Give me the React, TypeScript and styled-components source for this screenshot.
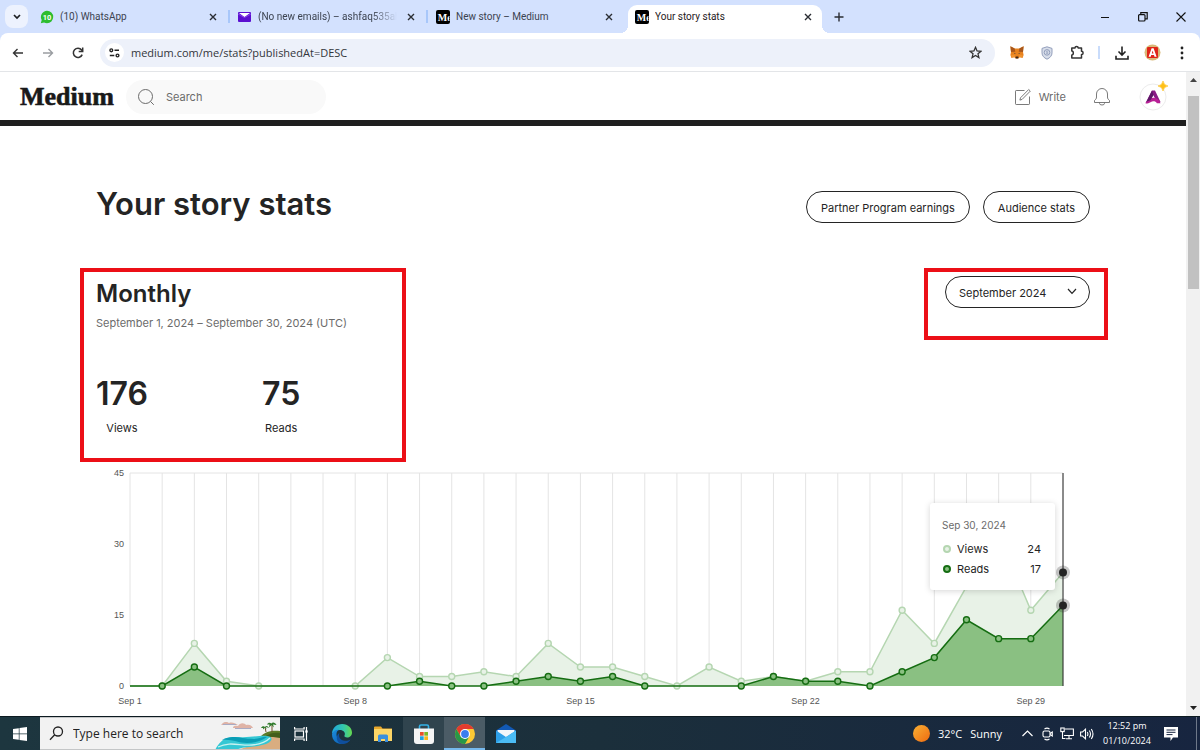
import React from 'react';
import styled, { createGlobalStyle } from 'styled-components';

const ui = `'Open Sans', 'Noto Sans', sans-serif`;
const sans = `Inter, 'Liberation Sans', sans-serif`;

const GlobalStyle = createGlobalStyle`
  *, *::before, *::after { box-sizing: border-box; }
  body { margin: 0; background: #fff; font-family: ${sans}; color: #242424; }
  button, input, select { font: inherit; color: inherit; }
  h1, h2, p, dl, dd { margin: 0; }
`;

const Screen = styled.div`
  min-height: 100vh;
  display: flex;
  flex-direction: column;
`;

/* ---------- Browser chrome ---------- */

const TabStrip = styled.div`
  height: 33px;
  flex: none;
  display: flex;
  align-items: stretch;
  background: #d3e1fe;
  padding-left: 5px;
`;

const IconButton = styled.button<{ $w?: number; $h?: number }>`
  width: ${(p) => p.$w ?? 30}px;
  height: ${(p) => p.$h ?? 30}px;
  flex: none;
  padding: 0;
  border: 0;
  background: none;
  display: flex;
  align-items: center;
  justify-content: center;
`;

const TabSearch = styled(IconButton)`
  align-self: center;
  background: #edf2fe;
  border-radius: 8px;
  margin-right: 3px;
`;

const Tab = styled.div<{ $active?: boolean; $divider?: boolean }>`
  flex: 0 1 198px;
  min-width: 0;
  position: relative;
  display: flex;
  align-items: center;
  gap: 6px;
  padding: 0 8px 0 9px;
  font: 10px/16px Roboto, ${ui};
  color: #3c4350;
  ${(p) =>
    p.$divider &&
    `&::after {
      content: '';
      position: absolute;
      right: -1px;
      top: 10px;
      width: 2px;
      height: 13px;
      background: #a8c7fa;
    }`}
  ${(p) =>
    p.$active &&
    `flex-basis: 194px;
     margin: 5px 0 0 3px;
     padding: 0 6px 5px 7px;
     background: #fff;
     color: #1f2023;
     border-radius: 9px 9px 0 0;
     &::before, &::after {
       content: '';
       position: absolute;
       bottom: 0;
       width: 8px;
       height: 8px;
     }
     &::before { left: -8px; background: radial-gradient(circle at 0 0, transparent 8px, #fff 8px); }
     &::after { right: -8px; background: radial-gradient(circle at 100% 0, transparent 8px, #fff 8px); }`}
`;

const TabTitle = styled.span<{ $fade?: boolean }>`
  flex: 1;
  min-width: 0;
  overflow: hidden;
  white-space: nowrap;
  padding-top: 1px;
  ${(p) => p.$fade && `mask-image: linear-gradient(to right, #000 82%, transparent);`}
`;

const WindowControls = styled.div`
  margin-left: auto;
  display: flex;
  align-items: center;
`;

const Toolbar = styled.div`
  height: 39px;
  flex: none;
  display: flex;
  align-items: center;
  padding: 0 3px;
  background: #d3e1fe;
  position: relative;
  isolation: isolate;
  &::before {
    content: '';
    position: absolute;
    inset: 0;
    z-index: -1;
    background: #fff;
    border-radius: 8px 8px 0 0;
    border-bottom: 1px solid #e3e5e8;
  }
`;

const Omnibox = styled.div`
  flex: 1;
  height: 28px;
  margin: 0 7px 0 7px;
  display: flex;
  align-items: center;
  padding: 0 5px;
  border-radius: 14px;
  background: #edf1fa;
`;

const SiteInfo = styled(IconButton)`
  background: #fff;
  border-radius: 50%;
`;

const Address = styled.input`
  flex: 1;
  min-width: 0;
  border: 0;
  outline: 0;
  padding: 0 7px;
  background: none;
  font: 11px/20px ${ui};
  color: #33363b;
`;

const ToolbarDivider = styled.span`
  width: 2px;
  height: 13px;
  margin: 0 7px 0 6px;
  background: #c9dcfb;
`;

/* ---------- Page ---------- */

const Viewport = styled.div`
  flex: 1;
  display: flex;
`;

const Page = styled.div`
  flex: 1;
  min-width: 0;
`;

const Scrollbar = styled.div`
  width: 14px;
  flex: none;
  display: flex;
  flex-direction: column;
  align-items: center;
  background: #f1f1f1;
`;

const ScrollArrow = styled.button`
  width: 14px;
  height: 16px;
  padding: 0;
  border: 0;
  background: none;
  display: grid;
  place-items: center;
`;

const ScrollTrack = styled.div`
  flex: 1;
  width: 11px;
  padding-top: 8px;
`;

const ScrollThumb = styled.div`
  height: 32%;
  background: #c1c1c1;
`;

const SiteHeader = styled.header`
  height: 54px;
  display: flex;
  align-items: center;
  padding: 1px 19px 0 20px;
  border-bottom: 6px solid #1f1f1f;
`;

const Logo = styled.a`
  font: 700 26px/30px 'Liberation Serif', serif;
  -webkit-text-stroke: 0.6px #191919;
  color: #191919;
  text-decoration: none;
`;

const SearchBox = styled.label`
  width: 200px;
  height: 34px;
  margin-left: 12px;
  padding: 0 10px 0 11px;
  display: flex;
  align-items: center;
  gap: 11px;
  border-radius: 17px;
  background: #f9f9f9;
`;

const SearchInput = styled.input`
  flex: 1;
  min-width: 0;
  padding: 0;
  border: 0;
  outline: 0;
  background: none;
  font-size: 11px;
  line-height: 20px;
  color: #242424;
  &::placeholder { color: #6b6b6b; opacity: 1; }
`;

const HeaderActions = styled.nav`
  margin-left: auto;
  display: flex;
  align-items: center;
`;

const WriteLink = styled.a`
  display: flex;
  align-items: center;
  gap: 7px;
  font-size: 11px;
  line-height: 20px;
  color: #6b6b6b;
  text-decoration: none;
  margin-right: 26px;
`;

const AvatarButton = styled(IconButton)`
  margin-left: 27px;
  position: relative;
`;

const Sparkle = styled.svg`
  position: absolute;
  top: -2px;
  right: -1px;
`;

const Main = styled.main`
  padding: 59px 96px 0;
`;

const TitleRow = styled.div`
  display: flex;
  align-items: center;
  justify-content: space-between;
`;

const Title = styled.h1`
  font-size: 31px;
  font-weight: 600;
  line-height: 36px;
`;

const Actions = styled.div`
  display: flex;
  gap: 13px;
  padding-top: 6px;
`;

const PillLink = styled.a`
  height: 32px;
  padding: 0 14px;
  border: 1px solid #242424;
  border-radius: 16px;
  font-size: 11px;
  line-height: 32px;
  color: #242424;
  text-decoration: none;
  white-space: nowrap;
`;

const SummaryRow = styled.div`
  display: flex;
  align-items: flex-start;
  justify-content: space-between;
  margin: 45px -18px 0 -16px;
`;

const Highlight = styled.section`
  border: 4px solid #ec0f17;
`;

const Summary = styled(Highlight)`
  width: 326px;
  height: 194px;
  padding: 8px 12px;
`;

const Picker = styled(Highlight)`
  width: 184px;
  height: 72px;
  padding: 4px 14px 0 17px;
`;

const SummaryTitle = styled.h2`
  font-size: 24px;
  font-weight: 600;
  line-height: 28px;
`;

const Period = styled.p`
  margin-top: 6px;
  font-size: 11px;
  line-height: 18px;
  color: #6b6b6b;
  white-space: nowrap;
`;

const Totals = styled.dl`
  display: flex;
  margin-top: 42px;
`;

const Total = styled.div`
  flex: 0 0 166px;
  display: flex;
`;

const TotalInner = styled.div`
  display: flex;
  flex-direction: column-reverse;
  align-items: center;
  gap: 5px;
`;

const TotalLabel = styled.dt`
  font-size: 11px;
  line-height: 18px;
`;

const TotalValue = styled.dd`
  font-size: 32px;
  font-weight: 600;
  line-height: 40px;
`;

const SelectWrap = styled.div`
  height: 32px;
  position: relative;
`;

const MonthSelect = styled.select`
  appearance: none;
  width: 100%;
  height: 32px;
  padding: 2px 30px 0 13px;
  border: 1px solid #242424;
  border-radius: 16px;
  background: none;
  font-size: 11px;
`;

const SelectArrow = styled.svg`
  position: absolute;
  right: 13px;
  top: 12px;
  pointer-events: none;
`;

const ChartBox = styled.figure`
  position: relative;
  margin: 5px 0 0;
`;

const ChartSvg = styled.svg`
  display: block;
  width: 100%;
  height: auto;
  overflow: visible;
  font: 9px 'Liberation Sans', Arial, sans-serif;
`;

const Tooltip = styled.div`
  position: absolute;
  top: 15%;
  right: 35px;
  width: 125px;
  height: 87px;
  padding: 13px 14px 0 12px;
  background: #fff;
  border-radius: 3px;
  box-shadow: 0 1px 6px rgba(0, 0, 0, 0.17);
`;

const TooltipDate = styled.p`
  margin-bottom: 5px;
  font-size: 10px;
  line-height: 18px;
  color: #6b6b6b;
`;

const TooltipRow = styled.div`
  display: flex;
  align-items: center;
  gap: 6px;
  padding-left: 1px;
  font-size: 11px;
  line-height: 20px;
`;

const Dot = styled.span<{ $border: string; $fill: string }>`
  width: 8px;
  height: 8px;
  border-radius: 50%;
  border: 2px solid ${(p) => p.$border};
  background: ${(p) => p.$fill};
`;

const TooltipValue = styled.span`
  margin-left: auto;
`;

/* ---------- Taskbar ---------- */

const Taskbar = styled.footer`
  height: 34px;
  flex: none;
  display: flex;
  align-items: stretch;
  border-top: 1px solid #0c1a20;
  background: linear-gradient(90deg, #1d363f, #1b2f3b 50%, #172540);
  color: #fff;
  font-family: ${ui};
`;

const TaskButton = styled.button<{ $state?: 'open' | 'focused' }>`
  width: 41px;
  padding: 0;
  border: 0;
  display: flex;
  align-items: center;
  justify-content: center;
  background: ${(p) => (p.$state === 'focused' ? '#4b5c66' : p.$state === 'open' ? '#30444e' : 'none')};
  box-shadow: ${(p) => (p.$state === 'focused' ? 'inset 0 -2px #76b9ed' : 'none')};
`;

const StartButton = styled(TaskButton)`
  width: 40px;
`;

const TaskSearch = styled.label`
  width: 240px;
  display: flex;
  align-items: center;
  padding-left: 9px;
  gap: 9px;
  overflow: hidden;
  background: #f2f2f2;
  border: solid #c4c6c7;
  border-width: 1px 0;
`;

const TaskInput = styled.input`
  flex: 1;
  min-width: 0;
  padding: 0;
  border: 0;
  outline: 0;
  background: none;
  font-size: 12px;
  line-height: 20px;
  &::placeholder { color: #222; opacity: 1; }
`;

const Tray = styled.div`
  margin-left: auto;
  display: flex;
  align-items: center;
`;

const Weather = styled.div`
  display: flex;
  align-items: center;
  gap: 8px;
  margin-right: 15px;
  font-size: 11px;
  line-height: 20px;
`;

const Clock = styled.time`
  width: 56px;
  margin: 0 9px 2px 2px;
  font-size: 9px;
  line-height: 15px;
  text-align: center;
`;

const ShowDesktop = styled.button`
  width: 4px;
  height: 100%;
  margin-left: 18px;
  padding: 0;
  border: 0;
  border-left: 1px solid #6e7889;
  background: none;
`;

/* ---------- Data ---------- */

const views = [0, 0, 9, 1, 0, 0, 0, 0, 6, 2, 2, 3, 2, 9, 4, 4, 2, 0, 4, 1, 2, 1, 3, 3, 16, 9, 21, 32, 16, 24];
const reads = [0, 0, 4, 0, 0, 0, 0, 0, 0, 1, 0, 0, 1, 2, 1, 2, 0, 0, 0, 0, 2, 1, 1, 0, 3, 6, 14, 10, 10, 17];

const LEFT = 34;
const RIGHT = 967;
const TOP = 6;
const BASE = 219;
const px = (day: number) => LEFT + (day * (RIGHT - LEFT)) / (views.length - 1);
const py = (n: number) => BASE - (n * (BASE - TOP)) / 45;

function Series({ data, line, fill, dot }: { data: number[]; line: string; fill: string; dot: string }) {
  const points = data.map((n, i) => `${px(i)},${py(n)}`).join(' ');
  const last = data.length - 1;
  return (
    <g>
      <polygon points={`${LEFT},${BASE} ${points} ${RIGHT},${BASE}`} fill={fill} />
      <polyline points={points} fill="none" stroke={line} strokeWidth="1.5" />
      {data.map((n, i) =>
        i < last && (n || data[i - 1] || data[i + 1]) ? (
          <circle key={i} cx={px(i)} cy={py(n)} r="3" fill={dot} stroke={line} strokeWidth="1.4" />
        ) : null,
      )}
    </g>
  );
}

function Chart() {
  return (
    <ChartBox>
      <ChartSvg viewBox="0 0 994 243" role="img" aria-label="Daily views and reads, September 2024">
        <g stroke="#e4e4e4">
          {views.map((_, i) => (
            <line key={i} x1={px(i)} x2={px(i)} y1={TOP} y2={BASE} />
          ))}
          <line x1={LEFT} x2={RIGHT} y1={TOP} y2={TOP} />
        </g>
        <g fill="#555" textAnchor="end">
          {[0, 15, 30, 45].map((n) => (
            <text key={n} x="28" y={py(n) + 3}>{n}</text>
          ))}
        </g>
        <g fill="#555" textAnchor="middle">
          {[1, 8, 15, 22, 29].map((d) => (
            <text key={d} x={px(d - 1)} y="237">{`Sep ${d}`}</text>
          ))}
        </g>
        <Series data={views} line="#b5d6b1" fill="#e8f2e7" dot="#e8f2e7" />
        <Series data={reads} line="#156d12" fill="#8ac082" dot="#8ac082" />
        <line x1={RIGHT} x2={RIGHT} y1={TOP} y2={BASE} stroke="#242424" />
        {[24, 17].map((n) => (
          <g key={n} fill="#242424">
            <circle cx={RIGHT} cy={py(n)} r="7" opacity="0.25" />
            <circle cx={RIGHT} cy={py(n)} r="4" />
          </g>
        ))}
      </ChartSvg>
      <Tooltip role="tooltip">
        <TooltipDate>Sep 30, 2024</TooltipDate>
        <TooltipRow>
          <Dot $border="#b5d6b1" $fill="#e8f2e7" />
          Views
          <TooltipValue>24</TooltipValue>
        </TooltipRow>
        <TooltipRow>
          <Dot $border="#156d12" $fill="#8ac082" />
          Reads
          <TooltipValue>17</TooltipValue>
        </TooltipRow>
      </Tooltip>
    </ChartBox>
  );
}

/* ---------- Icons ---------- */

const Close = () => (
  <svg width="8" height="8" viewBox="0 0 8 8" stroke="#2a2d33" strokeWidth="1.4"><path d="M1 1l6 6M7 1L1 7" /></svg>
);

const WhatsApp = () => (
  <svg width="14" height="14" viewBox="0 0 14 14">
    <path d="M7 .8a6.2 6.2 0 0 1 0 12.4c-1 0-2-.2-2.900-.7L.8 13.300l.9-3.200A6.200 6.200 0 0 1 7 .8z" fill="#2dbd2f" />
    <text x="7" y="9.800" textAnchor="middle" fontFamily="Roboto" fontWeight="700" fontSize="7.500" fill="#fff">10</text>
  </svg>
);

const Mail = () => (
  <svg width="14" height="10" viewBox="0 0 14 10">
    <rect width="13" height="10" rx="1" fill="#5b0fd0" />
    <path d="M1 1h11L6.500 5z" fill="#fff" />
    <path d="M0 2l6.500 3.500L13 2" fill="none" stroke="#8f4df0" strokeWidth=".8" />
  </svg>
);

const MediumMark = () => (
  <svg width="14" height="14" viewBox="0 0 14 14">
    <rect width="14" height="14" rx="2" fill="#000" />
    <svg width="13.500" height="14"><text x="1.800" y="10.500" fontFamily="Liberation Serif" fontWeight="700" fontSize="10" fill="#fff">Me</text></svg>
  </svg>
);

const Fox = () => (
  <svg width="14" height="13" viewBox="0 0 14 13">
    <path d="M.4.3l4.300 2.200h4.600L13.600.3 13 6l.6 3-1 3-3-.8L8.300 12.500H5.700L4.400 11.200l-3 .8-1-3 .6-3z" fill="#e8821e" />
    <path d="M.4.3l4.300 2.200.6 3.300L1 6zM13.600.3L9.300 2.500l-.6 3.300L13 6z" fill="#a8571b" />
    <path d="M1.400 9l3-.3 1 2.500-4-.2zM12.600 9l-3-.3-1 2.500 4-.2z" fill="#f0932e" />
    <path d="M3.600 6.800l1.800.4-.2.900zM10.400 6.800l-1.800.4.200.9z" fill="#233447" />
    <path d="M5.700 10.600h2.600l.2 1.300-.4.600H5.900l-.4-.6z" fill="#3a2417" />
  </svg>
);

const Shield = () => (
  <svg width="12" height="14" viewBox="0 0 12 14" fill="none" stroke="#929ebb">
    <path d="M6 .8l5 1.600v4.400c0 3-2 5-5 6.400-3-1.400-5-3.400-5-6.400V2.400z" fill="#d8deea" />
    <circle cx="6" cy="6.400" r="2.800" />
    <path d="M7.200 5.600c-1-.8-2.200-.2-2 .4s1.800.3 1.800 1-1.200.9-2 .2" strokeWidth=".8" />
  </svg>
);

const Puzzle = () => (
  <svg width="14" height="15" viewBox="0 0 14 15" fill="none" stroke="#333" strokeWidth="1.500" strokeLinejoin="round">
    <path d="M1.800 3h3.200a1.600 1.600 0 0 1 3.200 0H11.500v3.300a1.600 1.600 0 0 1 0 3.200V13H1.800v-3c2 0 2-4 0-4z" />
  </svg>
);

const Profile = () => (
  <svg width="17" height="17" viewBox="0 0 17 17">
    <circle cx="8.500" cy="8.500" r="8" fill="#d9b978" />
    <rect x="3" y="3" width="11" height="11" rx="1" fill="#df2518" />
    <path d="M4.600 12.800L7.600 4.200h2l3 8.600h-2.100l-.5-1.700H7.200l-.5 1.700zM8.600 6.600l-.8 2.900h1.700z" fill="#fff" />
  </svg>
);

const Avatar = () => (
  <svg width="28" height="28" viewBox="0 0 28 28">
    <circle cx="14" cy="14" r="13" fill="#fff" stroke="#ececec" />
    <path d="M13 7.500h3L21.500 19l-3.500.5L14.200 12l-3.700 6.500-4 1.500z" fill="#8a1a86" />
    <path d="M6.500 20.500c1.600-4 5-6 9-5.600 3.200.4 5.200 2.300 6 5.300h-3.600c-.9-1.500-2.100-2.100-3.900-2-2.300.2-3 2.400-7.500 2.300z" fill="#b81f95" />
    <path d="M13 7.500l1.500 4.500-3 5.200-4 1.500z" fill="#5d1768" />
  </svg>
);

const Beach = () => (
  <svg width="66" height="32" viewBox="0 0 66 32">
    <path d="M8 6c2-3 6-2 7-1 3-1 6 0 9 2H7zM19 10c0-3 4-2 5-2 2-4 7-3 8-1 4-1 6 1 7 3z" fill="#dfb3a6" />
    <path d="M9 6.500h13M21 10.500h16" stroke="#a9abc4" strokeWidth="1.200" />
    <path d="M22 32c10-2 22-7 30-13h14v13z" fill="#d9ad80" />
    <path d="M46 19c4-4 9-7 20-6v6z" fill="#5a7a26" />
    <path d="M52 18c4-3 9-4 14-3v5z" fill="#425e1b" />
    <path d="M1 32C7 22 10 19 24 19c12 1 23-2 29-1 8 1 5 7-5 9-10 3-18 1-26 5z" fill="#35c7d4" />
    <path d="M8 22c10-6 18-1 32-1 6 0 10-3 13-2-6 4-12 6-20 6-9 0-15-4-25-3z" fill="#0a9db5" />
    <path d="M4 29c12-6 22-1 34-2s16-5 18-7" fill="none" stroke="#c8f2ef" strokeWidth="1.300" />
    <path d="M52 14l-1-5M58 14V7" stroke="#70502b" />
    <path d="M47 10c1-2 3-2 4-1 1-2 3-1 4 1l-3-1 .5 2.500-1.500-2-2 2V10zM53 6.500c1-2 3-2 4.500-1 1-2 4-1 5 1.500L59 6.500l1 3-2.500-2.500L55 9.500l.5-3z" fill="#2f7a2a" />
  </svg>
);

const Edge = () => (
  <svg width="22" height="22" viewBox="0 0 22 22">
    <defs>
      <linearGradient id="edgeTop" x1="0" x2="1"><stop stopColor="#1fa5e0" /><stop offset=".6" stopColor="#35c9a8" /><stop offset="1" stopColor="#65d84e" /></linearGradient>
      <linearGradient id="edgeLow" x1="0" x2="1" y2="1"><stop stopColor="#1b8bdc" /><stop offset="1" stopColor="#0b5cb0" /></linearGradient>
    </defs>
    <path d="M1 11C1 5 5.600 1 11.200 1 17.500 1 21 5.500 21 9.500c0 3.300-2.400 5-4.800 5-2 0-3.400-.9-2.700-1.900C15 9.300 12 7 9 7c-4 0-7 2-8 4z" fill="url(#edgeTop)" />
    <path d="M1 11c1-3 4-4.600 7-4.200C5.500 8 4.900 11 6 14c1.200 3.600 5 6.200 9 5.500-5 3.200-14 1-14-8.500z" fill="url(#edgeLow)" />
    <path d="M8.500 10c-1.600 3 .5 7.500 5.500 7.800 2.300.1 4.300-.6 5.600-1.400-2 3.400-6 5.100-9.600 4.500-4.500-1.500-6-8.500-1.500-10.900z" fill="#0f4f9e" />
  </svg>
);

const Explorer = () => (
  <svg width="18" height="16" viewBox="0 0 18 16">
    <path d="M0 1.500Q0 .5 1 .5h6l1.500 2H18v12.500H0z" fill="#e9a82c" />
    <path d="M0 3h18v12H0z" fill="#fcd566" />
    <path d="M4 16V10q0-1.500 1.500-1.500h7q1.500 0 1.500 1.500v6h-3v-3H7v3z" fill="#3b8fdd" />
  </svg>
);

const Store = () => (
  <svg width="20" height="20" viewBox="0 0 20 20">
    <path d="M5.500 5V2.500Q5.500 1 7 1h6q1.500 0 1.500 1.500V5" fill="none" stroke="#35b3e8" strokeWidth="1.600" />
    <path d="M0 4.500h20V17q0 3-3 3H3q-3 0-3-3z" fill="#f5f5f5" />
    <path d="M6 8h3.700v3.700H6z" fill="#e8502c" /><path d="M10.300 8H14v3.700h-3.700z" fill="#7db928" />
    <path d="M6 12.300h3.700V16H6z" fill="#1fa2e3" /><path d="M10.300 12.300H14V16h-3.700z" fill="#f9b61a" />
  </svg>
);

const ChromeLogo = () => (
  <svg width="20" height="20" viewBox="0 0 20 20">
    <circle cx="10" cy="10" r="10" fill="#fcc934" />
    <path d="M1.340 5A10 10 0 0 1 18.660 5H10L5.670 12.500z" fill="#e33b2e" />
    <path d="M1.340 5A10 10 0 0 0 10 20l4.330-7.500H5.670z" fill="#279847" />
    <circle cx="10" cy="10" r="5" fill="#fff" />
    <circle cx="10" cy="10" r="3.900" fill="#3b7ded" />
  </svg>
);

const MailApp = () => (
  <svg width="20" height="19" viewBox="0 0 20 19">
    <path d="M0 6.500L10 0l10 6.500V10H0z" fill="#1259b4" />
    <path d="M1.500 6h17v8h-17z" fill="#f3f6fa" />
    <path d="M0 6.500l10 6.500L20 6.500V19H0z" fill="#2d9fe8" />
    <path d="M0 19l10-6 10-6.500V19z" fill="#4bbcf5" />
  </svg>
);

export default function App() {
  return (
    <Screen>
      <GlobalStyle />
      <TabStrip>
        <TabSearch $w={23} $h={23} aria-label="Search tabs">
          <svg width="8" height="6" viewBox="0 0 8 6" fill="none" stroke="#1d1f22" strokeWidth="1.700"><path d="M1 1l3 3 3-3" /></svg>
        </TabSearch>
        <Tab $divider>
          <WhatsApp />
          <TabTitle>(10) WhatsApp</TabTitle>
          <IconButton $w={16} $h={16} aria-label="Close tab"><Close /></IconButton>
        </Tab>
        <Tab $divider>
          <Mail />
          <TabTitle $fade>(No new emails) – ashfaq535ah</TabTitle>
          <IconButton $w={16} $h={16} aria-label="Close tab"><Close /></IconButton>
        </Tab>
        <Tab>
          <MediumMark />
          <TabTitle>New story – Medium</TabTitle>
          <IconButton $w={16} $h={16} aria-label="Close tab"><Close /></IconButton>
        </Tab>
        <Tab $active>
          <MediumMark />
          <TabTitle>Your story stats</TabTitle>
          <IconButton $w={16} $h={16} aria-label="Close tab"><Close /></IconButton>
        </Tab>
        <IconButton $w={33} $h={33} aria-label="New tab">
          <svg width="10" height="10" viewBox="0 0 10 10" stroke="#2a2d33" strokeWidth="1.400"><path d="M5 .5v9M.5 5h9" /></svg>
        </IconButton>
        <WindowControls>
          <IconButton $w={38} $h={33} aria-label="Minimize">
            <svg width="8" height="8" viewBox="0 0 8 8" stroke="#111"><path d="M0 4.500h8" /></svg>
          </IconButton>
          <IconButton $w={38} $h={33} aria-label="Restore">
            <svg width="10" height="10" viewBox="0 0 10 10" fill="none" stroke="#111" strokeWidth="1.200"><rect x=".6" y="2.600" width="6.400" height="6.400" rx="1" /><path d="M2.800 2.500V.7h6.400v6.100H7.100" /></svg>
          </IconButton>
          <IconButton $w={38} $h={33} aria-label="Close">
            <svg width="10" height="10" viewBox="0 0 10 10" stroke="#111" strokeWidth="1.100"><path d="M.5.5l9 9M9.500.5l-9 9" /></svg>
          </IconButton>
        </WindowControls>
      </TabStrip>

      <Toolbar>
        <IconButton aria-label="Back">
          <svg width="12" height="10" viewBox="0 0 12 10" fill="none" stroke="#333" strokeWidth="1.400"><path d="M11 5H1.500M5.500 1l-4 4 4 4" /></svg>
        </IconButton>
        <IconButton aria-label="Forward">
          <svg width="12" height="10" viewBox="0 0 12 10" fill="none" stroke="#9a9da1" strokeWidth="1.400"><path d="M1 5h9.500M6.500 1l4 4-4 4" /></svg>
        </IconButton>
        <IconButton aria-label="Reload">
          <svg width="12" height="12" viewBox="0 0 12 12" fill="none" stroke="#333" strokeWidth="1.500"><path d="M10.200 7.600A4.600 4.600 0 1 1 9.600 3L10.600 4.300" /><path d="M10.700.6v4H6.700" /></svg>
        </IconButton>
        <Omnibox>
          <SiteInfo $w={19} $h={19} aria-label="Site information">
            <svg width="11" height="10" viewBox="0 0 11 10" fill="none" stroke="#222" strokeWidth="1.400"><circle cx="2.300" cy="2.300" r="1.400" /><path d="M5.500 2.300h4.500M.8 7.500h4.500" /><circle cx="8.500" cy="7.500" r="1.400" /></svg>
          </SiteInfo>
          <Address aria-label="Address" defaultValue="medium.com/me/stats?publishedAt=DESC" />
          <IconButton aria-label="Bookmark this page">
            <svg width="13" height="13" viewBox="0 0 24 24" fill="none" stroke="#333" strokeWidth="2.400"><path d="M12 2.500l2.900 6.600 7.100.6-5.400 4.700 1.700 7L12 17.600l-6.300 3.800 1.700-7L2 9.700l7.100-.6z" /></svg>
          </IconButton>
        </Omnibox>
        <IconButton aria-label="Wallet extension"><Fox /></IconButton>
        <IconButton aria-label="Shield extension"><Shield /></IconButton>
        <IconButton aria-label="Extensions"><Puzzle /></IconButton>
        <ToolbarDivider />
        <IconButton aria-label="Downloads">
          <svg width="14" height="14" viewBox="0 0 14 14" fill="none" stroke="#222" strokeWidth="1.600"><path d="M7 .5v8.500M3.500 5.500L7 9l3.500-3.500M1 9.800V13h12V9.800" /></svg>
        </IconButton>
        <IconButton aria-label="Profile"><Profile /></IconButton>
        <IconButton aria-label="Menu">
          <svg width="4" height="14" viewBox="0 0 4 14" fill="#222"><circle cx="2" cy="2" r="1.400" /><circle cx="2" cy="7" r="1.400" /><circle cx="2" cy="12" r="1.400" /></svg>
        </IconButton>
      </Toolbar>

      <Viewport>
        <Page>
          <SiteHeader>
            <Logo href="#">Medium</Logo>
            <SearchBox>
              <svg width="18" height="18" viewBox="0 0 18 18" fill="none" stroke="#6b6b6b"><circle cx="8.500" cy="8.500" r="7" /><path d="M13.500 13.500l3.300 3.300" /></svg>
              <SearchInput type="search" placeholder="Search" aria-label="Search" />
            </SearchBox>
            <HeaderActions>
              <WriteLink href="#">
                <svg width="18" height="18" viewBox="0 0 18 18" fill="none" stroke="#6b6b6b" strokeWidth=".9"><path d="M10.500 2.500H2.200q-.7 0-.7.700V15.800q0 .7.700.7H14.800q.7 0 .7-.7V8.500" /><path d="M6.500 9.800L14.700 1.500l1.600 1.600-8.200 8.300-2.200.7z" /></svg>
                Write
              </WriteLink>
              <IconButton $w={20} $h={20} aria-label="Notifications">
                <svg width="18" height="19" viewBox="0 0 18 19" fill="none" stroke="#6b6b6b" strokeWidth=".9"><path d="M1.500 15.500v-2c1.400-1.100 2-2 2-3.500V7a5.500 5.500 0 0 1 11 0v3c0 1.500.6 2.400 2 3.500v2zM6.500 15.500v.8q0 1.700 2.500 1.700t2.500-1.700v-.8" /></svg>
              </IconButton>
              <AvatarButton $w={28} $h={28} aria-label="Account">
                <Avatar />
                <Sparkle width="10" height="10" viewBox="0 0 10 10" fill="#ffc017"><path d="M5 0q.7 4.300 5 5-4.300.7-5 5-.7-4.300-5-5 4.300-.7 5-5z" stroke="#ffc017" strokeWidth=".6" /></Sparkle>
              </AvatarButton>
            </HeaderActions>
          </SiteHeader>

          <Main>
            <TitleRow>
              <Title>Your story stats</Title>
              <Actions>
                <PillLink href="#">Partner Program earnings</PillLink>
                <PillLink href="#">Audience stats</PillLink>
              </Actions>
            </TitleRow>
            <SummaryRow>
              <Summary>
                <SummaryTitle>Monthly</SummaryTitle>
                <Period>September 1, 2024 – September 30, 2024 (UTC)</Period>
                <Totals>
                  <Total>
                    <TotalInner><TotalLabel>Views</TotalLabel><TotalValue>176</TotalValue></TotalInner>
                  </Total>
                  <Total>
                    <TotalInner><TotalLabel>Reads</TotalLabel><TotalValue>75</TotalValue></TotalInner>
                  </Total>
                </Totals>
              </Summary>
              <Picker>
                <SelectWrap>
                  <MonthSelect aria-label="Month" defaultValue="2024-09">
                    <option value="2024-09">September 2024</option>
                  </MonthSelect>
                  <SelectArrow width="10" height="7" viewBox="0 0 10 7" fill="none" stroke="#242424" strokeWidth="1.200"><path d="M1 1l4 4.300L9 1" /></SelectArrow>
                </SelectWrap>
              </Picker>
            </SummaryRow>
            <Chart />
          </Main>
        </Page>
        <Scrollbar>
          <ScrollArrow aria-label="Scroll up"><svg width="7" height="4" viewBox="0 0 7 4" fill="#444"><path d="M0 4l3.500-4L7 4z" /></svg></ScrollArrow>
          <ScrollTrack><ScrollThumb /></ScrollTrack>
          <ScrollArrow aria-label="Scroll down"><svg width="7" height="4" viewBox="0 0 7 4" fill="#222"><path d="M0 0l3.500 4L7 0z" /></svg></ScrollArrow>
        </Scrollbar>
      </Viewport>

      <Taskbar>
        <StartButton aria-label="Start">
          <svg width="14" height="14" viewBox="0 0 14 14" fill="#fff"><path d="M0 2l5.800-.8v5.400H0zM6.500 1.100L14 0v6.600H6.500zM0 7.300h5.800v5.500L0 12zM6.500 7.300H14V14l-7.500-1.100z" /></svg>
        </StartButton>
        <TaskSearch>
          <svg width="15" height="15" viewBox="0 0 15 15" fill="none" stroke="#222" strokeWidth="1.300"><circle cx="9" cy="5.500" r="4.500" /><path d="M5.700 8.700L1 13.800" /></svg>
          <TaskInput placeholder="Type here to search" aria-label="Type here to search" />
          <Beach />
        </TaskSearch>
        <TaskButton aria-label="Task view">
          <svg width="14" height="14" viewBox="0 0 14 14" fill="none" stroke="#fff" strokeWidth="1.200"><rect x="1" y="4" width="8.500" height="6" /><path d="M.6 0v2h9.500V0M.6 14v-2h9.500v2M12.500 0v14" /><path d="M11.300 4.500h2.400" strokeWidth="2.200" /></svg>
        </TaskButton>
        <TaskButton aria-label="Edge"><Edge /></TaskButton>
        <TaskButton aria-label="File Explorer"><Explorer /></TaskButton>
        <TaskButton $state="open" aria-label="Microsoft Store"><Store /></TaskButton>
        <TaskButton $state="focused" aria-label="Chrome"><ChromeLogo /></TaskButton>
        <TaskButton aria-label="Mail"><MailApp /></TaskButton>
        <Tray>
          <Weather>
            <svg width="17" height="17" viewBox="0 0 17 17"><defs><linearGradient id="sun" x2="1" y2="1"><stop stopColor="#f9b134" /><stop offset="1" stopColor="#ee6a10" /></linearGradient></defs><circle cx="8.500" cy="8.500" r="8.500" fill="url(#sun)" /></svg>
            <span>32°C</span>
            <span>Sunny</span>
          </Weather>
          <IconButton $w={20} aria-label="Show hidden icons">
            <svg width="11" height="7" viewBox="0 0 11 7" fill="none" stroke="#fff" strokeWidth="1.200"><path d="M.5 6l5-5 5 5" /></svg>
          </IconButton>
          <IconButton $w={20} aria-label="Meet now">
            <svg width="11" height="14" viewBox="0 0 11 14" fill="none" stroke="#fff" strokeWidth="1.100"><rect x="1" y="4" width="7" height="6" rx="1.500" /><path d="M8 6.500l2.300-1.500v4L8 7.500M2.500 2q2.500-1.800 5 0M2.500 12q2.500 1.800 5 0" /></svg>
          </IconButton>
          <IconButton $w={20} aria-label="Network">
            <svg width="14" height="13" viewBox="0 0 14 13" fill="none" stroke="#fff" strokeWidth="1.100"><path d="M5 2h8.400v6.500H4M9 8.500v3M6 11.700h6M2.500 5v6.500h3" /><rect x=".8" y="1" width="3.400" height="3.600" /></svg>
          </IconButton>
          <IconButton $w={20} aria-label="Volume">
            <svg width="14" height="12" viewBox="0 0 14 12" fill="none" stroke="#fff" strokeWidth="1.100"><path d="M.6 4h2L5.500 1.200v9.600L2.600 8h-2zM7.300 4q1.200 2 0 4M9.300 2.500q2.400 3.500 0 7M11.300 1q3.400 5 0 10" /></svg>
          </IconButton>
          <Clock dateTime="2024-10-01T12:52">12:52 pm<br />01/10/2024</Clock>
          <IconButton $w={14} aria-label="Notifications">
            <svg width="14" height="14" viewBox="0 0 14 14"><path d="M0 0h14v10.500H9L6.500 14v-3.500H0z" fill="#fff" /><path d="M2.500 3h9M2.500 5.300h9M2.500 7.600h6" stroke="#172540" /></svg>
          </IconButton>
          <ShowDesktop aria-label="Show desktop" />
        </Tray>
      </Taskbar>
    </Screen>
  );
}
